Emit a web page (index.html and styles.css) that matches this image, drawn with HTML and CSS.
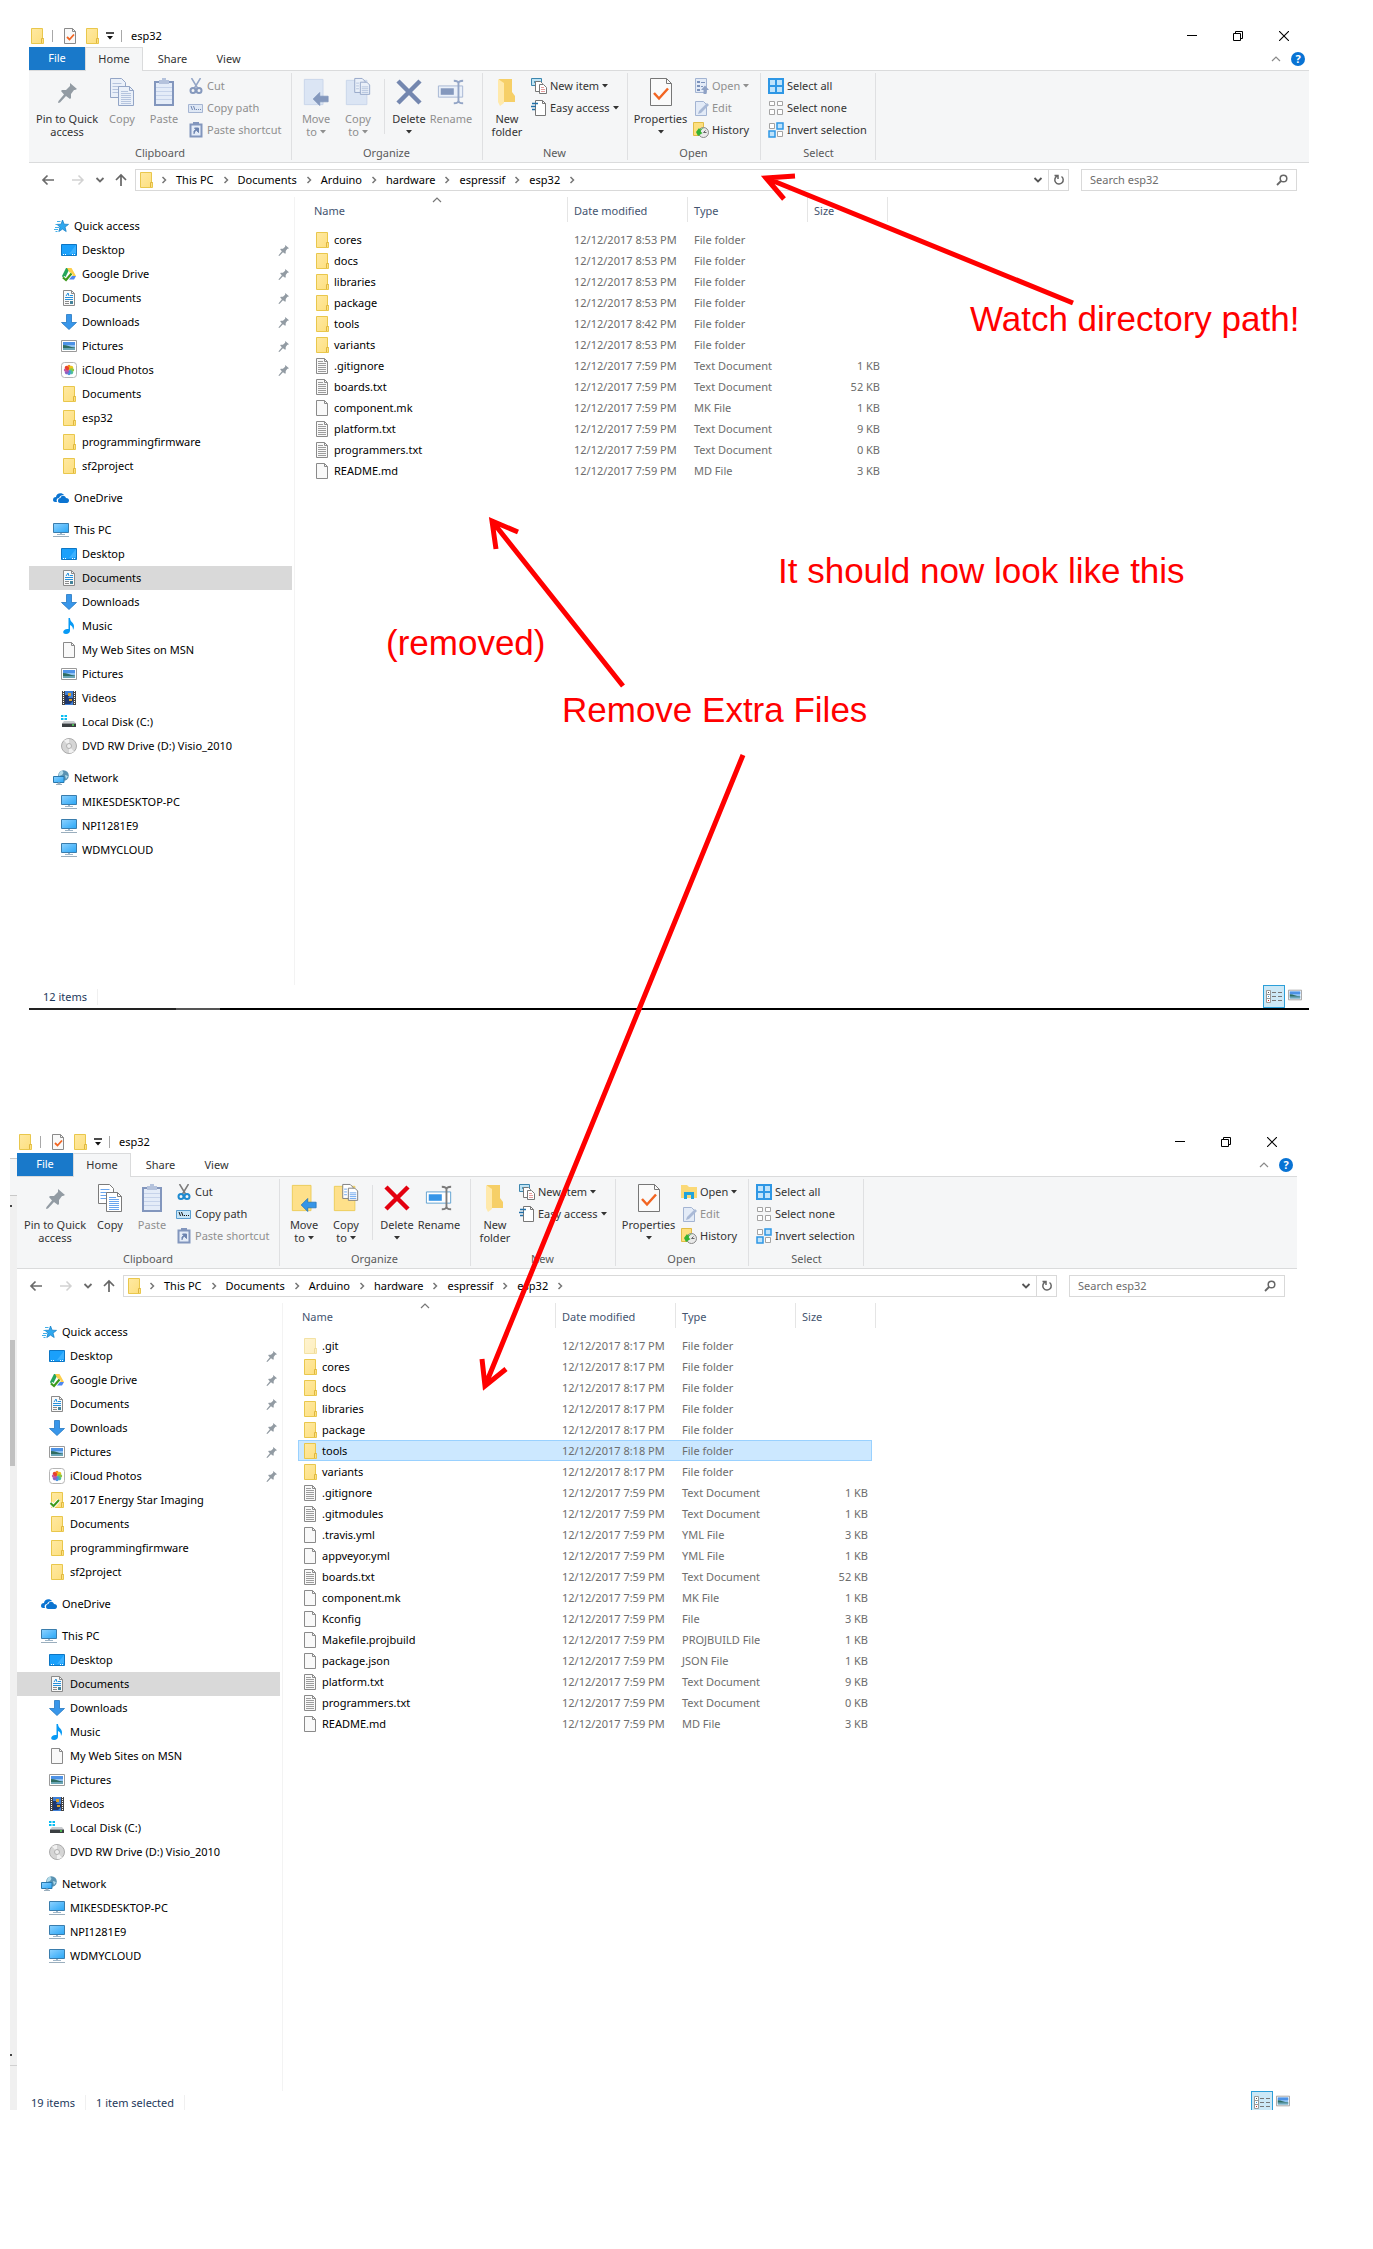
FILE: index.html
```html
<!DOCTYPE html>
<html lang="en">
<head>
<meta charset="utf-8">
<title>esp32 folder cleanup</title>
<link rel="stylesheet" href="styles.css">
</head>
<body>
<svg class="sprite" aria-hidden="true">
  <defs>
    <linearGradient id="gy" x1="0" y1="0" x2="1" y2="1"><stop offset="0" stop-color="#ffe9a2"/><stop offset="1" stop-color="#fddf7e"/></linearGradient>
    <linearGradient id="gb" x1="0" y1="0" x2="1" y2="1"><stop offset="0" stop-color="#8fd3ff"/><stop offset=".5" stop-color="#5bbcfb"/><stop offset="1" stop-color="#2ba7f5"/></linearGradient>
  </defs>
  <symbol id="folder" viewBox="0 0 16 16"><path d="M2.500.5h11v10h1v5h-12z" fill="url(#gy)" stroke="#e9c74c"/><path d="M12.500 15v-4.500h2" fill="none" stroke="#dfb63e"/></symbol>
  <symbol id="folder-check" viewBox="0 0 16 16"><use href="#folder"/><path d="M1.500 11l3 3 5.500-6" fill="none" stroke="#fff" stroke-width="4"/><path d="M1.500 11l3 3 5.500-6" fill="none" stroke="#3d9a1c" stroke-width="2"/></symbol>
  <symbol id="file" viewBox="0 0 16 16"><path d="M2.500.5h8l3 3v12h-11z" fill="#f9f9f9" stroke="#8a8a8a"/><path d="M10.500.5v3h3" fill="none" stroke="#8a8a8a"/></symbol>
  <symbol id="text" viewBox="0 0 16 16"><use href="#file"/><path d="M4 3.500h5M4 5.500h8M4 7.500h8M4 9.500h8M4 11.500h8M4 13.500h8" stroke="#9c9c9c"/></symbol>
  <symbol id="doc" viewBox="0 0 16 16"><use href="#file"/><path d="M5 6l2-3 1 3M4 7.500h8M9 5.500h3M4 9.500h8" fill="none" stroke="#2490dc"/><path d="M4 11.500h4M4 13.500h4" stroke="#8a8a8a"/><path d="M9 11h3v3H9z" fill="#45849b"/></symbol>
  <symbol id="checkdoc" viewBox="0 0 16 16"><use href="#file"/><path d="M5 9l2.500 2.500 4.500-5" fill="none" stroke="#f26522" stroke-width="1.800"/></symbol>
  <symbol id="star" viewBox="0 0 16 16"><path d="M9.500 2l1.600 4.200 4.400.2-3.500 2.700 1.200 4.400-3.700-2.400-3.700 2.400 1.200-4.400L4 6.400l4.100-.2z" fill="#2fa8ef" stroke="#1680c8" stroke-width=".8"/><path d="M4 3.500h3.500M2.500 6.500h2M2 9.500h4M1 11.500h4M2.500 13.500h2" stroke="#41aee8"/></symbol>
  <symbol id="desktop" viewBox="0 0 16 16"><path d="M.5 2.500h15v11H.5z" fill="#1aa0fb" stroke="#0d76c4"/><path d="M15 3v8L8 12z" fill="#3bb1ff"/><path d="M2 12.500h1M4 12.500h1M11 12.500h1M13 12.500h1" stroke="#fff"/></symbol>
  <symbol id="gdrive" viewBox="0 0 16 16"><path d="M5 2h4L5 10l-2 3.500L1 10z" fill="#25a55b"/><path d="M6 2h4.500l4.500 8h-4.500z" fill="#fdcf4b"/><path d="M6 10h9l-2 3.500H4z" fill="#4d86f0"/><path d="M2 11.500l3 2.500 5.500-6.500" fill="none" stroke="#fff" stroke-width="4"/><path d="M2 11.500l3 2.500 5.500-6.500" fill="none" stroke="#3d9a1c" stroke-width="2.200"/></symbol>
  <symbol id="down" viewBox="0 0 16 16"><path d="M5.500.5h5v8h5L8 15.500.5 8.500h5z" fill="#3896ea" stroke="#2478c2" stroke-width=".8"/></symbol>
  <symbol id="picture" viewBox="0 0 16 16"><path d="M.5 2.500h15v11H.5z" fill="#fff" stroke="#9a9a9a"/><path d="M2 4h12v8H2z" fill="#8fc2f4"/><path d="M2 4h12v3H2z" fill="#4d92e6"/><path d="M2 7c4 0 7 2 12 2.500V10H2z" fill="#2f6d62"/><path d="M2 10h12v2H2z" fill="#6aa5b5"/></symbol>
  <symbol id="photos" viewBox="0 0 16 16"><rect x=".5" y=".5" width="15" height="15" rx="3" fill="#fff" stroke="#b5b5b5"/><g stroke-width="3.400" stroke-linecap="round"><path d="M8 6V4.500" stroke="#f58a1f"/><path d="M9.500 6.500l1-1" stroke="#e9c51c"/><path d="M10 8h1.500" stroke="#8fc540"/><path d="M9.500 9.500l1 1" stroke="#4dbf9b"/><path d="M8 10v1.500" stroke="#4a94de"/><path d="M6.500 9.500l-1 1" stroke="#8b62c4"/><path d="M6 8H4.500" stroke="#c65aa5"/><path d="M6.500 6.500l-1-1" stroke="#e8402c"/></g></symbol>
  <symbol id="onedrive" viewBox="0 0 16 16"><path d="M0 10c0-2 1-3 3-3 0-4 6-5 8-2-3 0-4 1-5 3-2 0-3 2-2 4H2c-1 0-2-1-2-2z" fill="#0b74d1"/><path d="M5 11c0-2 1-3 2.500-3C8 5 12 5 13 8c2 0 3 1 3 2.500S15 13 14 13H7c-1 0-2-1-2-2z" fill="#0b74d1"/></symbol>
  <symbol id="pc" viewBox="0 0 16 16"><path d="M.5 1.500h15v9H.5z" fill="url(#gb)" stroke="#3a7dad"/><path d="M7 11h2v1H7zM4 12h8v1H4z" fill="#9fb6c8"/><path d="M0 14.500h16" stroke="#9aaebd"/></symbol>
  <symbol id="music" viewBox="0 0 16 16"><path d="M7.500 0h1.500c0 4 4 4.500 4 8.500 0 1.500-.5 2.500-1 3.500 0-3-1-4-3-5v5.500c0 2-1.500 3.500-4 3.500-2 0-2.800-1-2.800-2 0-2 2.300-3.500 5.300-3z" fill="#089af5"/></symbol>
  <symbol id="video" viewBox="0 0 16 16"><path d="M1 1h14v14H1z" fill="#454545"/><path d="M4 1h8v14H4z" fill="#3f7fd6"/><path d="M4 5h5l-2 3h5v3l-3 3H4z" fill="#1d376e"/><path d="M7 3h3v3H7zM8 9h3v2H8z" fill="#d9a12b"/><path d="M2.500 1v14M13.500 1v14" stroke="#fff" stroke-dasharray="1 1"/></symbol>
  <symbol id="disk" viewBox="0 0 16 16"><path d="M0 1h2.500v2H0zM3.500 1H6v2H3.500zM0 4h2.500v2H0zM3.500 4H6v2H3.500z" fill="#09bdf2"/><path d="M3 7h10l2 2.500H1z" fill="#c9cccf"/><path d="M1 9.500h14v3.500H1z" fill="#3b3f42"/><path d="M11 11h2" stroke="#54e05a" stroke-width="1.500"/></symbol>
  <symbol id="dvd" viewBox="0 0 16 16"><circle cx="8" cy="8" r="7.500" fill="#d5d5d5" stroke="#aaa"/><path d="M8 8L3 2.500A7 7 0 018 1zM8 8l5 5.500A7 7 0 018 15z" fill="#f1f1f1"/><circle cx="8" cy="8" r="2.500" fill="#eee" stroke="#b0b0b0"/></symbol>
  <symbol id="network" viewBox="0 0 16 16"><circle cx="10.500" cy="5.500" r="5.300" fill="#5a93b2"/><path d="M8 1c3 0 3 2 1 4l-3 1c0-2 0-4 2-5zM12 5l3 1-2 3z" fill="#b4dcea"/><path d="M.5 6.500h10.500v6H.5z" fill="url(#gb)" stroke="#2878ad"/><path d="M5 13h2v1H5zM3 14.500h6" fill="#9fb6c8" stroke="#9aaebd"/></symbol>
  <symbol id="pin" viewBox="0 0 20 20"><path d="M13 0l7 6-2 1-1 0-3 4 0 4-1 1-4-3-6 6.500-2 .5.500-2L7 11.500 4 8l1-1h4l4-4z" fill="currentColor"/></symbol>
  <symbol id="copy" viewBox="0 0 26 30"><path d="M1.500 1.500h11l4 4v15h-15z" fill="var(--paper)" stroke="var(--line)"/><path d="M3.500 6.500h9M3.500 9.500h11M3.500 12.500h11M3.500 15.500h11" stroke="var(--accent)"/><path d="M9.500 9.500h11l4 4v15h-15z" fill="var(--paper)" stroke="var(--line)"/><path d="M20.500 9.500v4h4" fill="none" stroke="var(--line)"/><path d="M12 14.500h7M12 16.500h10M12 18.500h10M12 20.500h10M12 22.500h10M12 24.500h10M12 26.500h10" stroke="var(--accent)"/></symbol>
  <symbol id="paste" viewBox="0 0 22 30"><path d="M1 4h20v25H1z" fill="#8296bd"/><path d="M3 6h16v21H3z" fill="#e4ecf8"/><path d="M3 10.500h16M3 14.500h16M3 18.500h16M3 22.500h16" stroke="#c6d3ea"/><path d="M6 7V3h3V1h4v2h3v4z" fill="#b4c2dc"/></symbol>
  <symbol id="cut" viewBox="0 0 16 16"><path d="M3.500 0l6 10M12.500 0l-6 10" stroke="var(--line)" stroke-width="1.500" fill="none"/><circle cx="5" cy="12.500" r="2.500" fill="none" stroke="var(--strong)" stroke-width="2"/><circle cx="11" cy="12.500" r="2.500" fill="none" stroke="var(--strong)" stroke-width="2"/></symbol>
  <symbol id="path" viewBox="0 0 16 16"><path d="M.5 4.500h14v8H.5z" fill="var(--soft)" stroke="var(--line2)"/><path d="M3 6l1.500 4M5.500 6L7 10M8 9.500h1M10 9.500h1M12 9.500h1" stroke="var(--ink)"/></symbol>
  <symbol id="shortcut" viewBox="0 0 16 16"><path d="M2.500 2.500h11v12h-11z" fill="#e4ecf8" stroke="#8296bd" stroke-width="2"/><path d="M5 0h6v3H5z" fill="#8296bd"/><path d="M6 12V9l3-2M6.500 6h4v4.500z" fill="#6d84b0" stroke="#6d84b0"/></symbol>
  <symbol id="moveto" viewBox="0 0 30 30"><path d="M2.500 1.500h20v27h-20z" fill="var(--fold)" stroke="var(--foldline)"/><path d="M12 22.500l7-7v4h9v6h-9v4z" fill="var(--blue)" stroke="var(--blueline)" stroke-width=".8"/></symbol>
  <symbol id="copyto" viewBox="0 0 30 30"><path d="M2.500 2.500h22v26h-22z" fill="var(--fold)" stroke="var(--foldline)"/><path d="M11.500.5h8l3 3v12h-11z" fill="var(--paper)" stroke="var(--line)"/><path d="M17.500 4.500h7l3 3v10h-10z" fill="var(--paper)" stroke="var(--line)"/><path d="M13 5.500h3M13 8.500h3M13 11.500h3M19 9.500h7M19 11.500h7M19 13.500h7M19 15.500h7" stroke="var(--accent)"/></symbol>
  <symbol id="delete" viewBox="0 0 28 30"><path d="M3 4l22 22M25 4L3 26" stroke="var(--del)" stroke-width="4.500"/></symbol>
  <symbol id="rename" viewBox="0 0 30 30"><path d="M1.500 8.500h26v12h-26z" fill="var(--paper)" stroke="var(--line2)"/><path d="M4 11h14v7H4z" fill="var(--blue)"/><path d="M18 3q5 0 5 3v18q0 3-5 3M28 3q-5 0-5 3v18q0 3 5 3" fill="none" stroke="var(--line)" stroke-width="2"/></symbol>
  <symbol id="newfolder" viewBox="0 0 24 30"><path d="M4 2h13v13l3 4v6H7z" fill="#f6cf67"/><path d="M3 2l6 4v20l-4 3-2-4z" fill="#ffe9ab"/></symbol>
  <symbol id="newitem" viewBox="0 0 16 16"><path d="M.5.5h10v7H.5z" fill="#bfe4f5" stroke="#3c86ae"/><path d="M3 3h4v2H3z" fill="#4d9abf"/><path d="M4.500 3.500h5l2 2v8h-7z" fill="#fff" stroke="#777"/><path d="M8.500 6.500h4l3 3v6h-7z" fill="#fff" stroke="#777"/><path d="M10 9.500h3M10 11.500h4M10 13.500h4" stroke="#e59b9b"/></symbol>
  <symbol id="easy" viewBox="0 0 16 16"><path d="M4.500.5h7l3 3v12h-10z" fill="#fff" stroke="#777"/><path d="M11.500.5v3h3" fill="none" stroke="#777"/><path d="M1 3.500h6M0 6.500h5M1 9.500h3" stroke="#2270a8" stroke-width="1.500"/></symbol>
  <symbol id="properties" viewBox="0 0 22 30"><path d="M.5 1.500h16l5 5v22H.5z" fill="#fafafa" stroke="#777"/><path d="M16.500 1.500v5h5" fill="none" stroke="#777"/><path d="M4 16l5 5.500 9-10" fill="none" stroke="#f26522" stroke-width="2.500"/></symbol>
  <symbol id="open-off" viewBox="0 0 16 16"><path d="M2.500.5h11v14h-11z" fill="#e3ebf7" stroke="#a3b4d2"/><path d="M4 3h3v2H4zM4 7h3v2H4zM4 11h3v2H4z" fill="#7c92bb"/><path d="M8 4.500h4M8 8.500h2" stroke="#7c92bb"/><path d="M10.500 16v-4H8l4-4.500 4 4.500h-2.500v4z" fill="#8fa2c5"/></symbol>
  <symbol id="open-on" viewBox="0 0 16 16"><path d="M0 2V1h6l2 2h8v11H0z" fill="#fbd977"/><path d="M3 15V8h10v7h-3v-4H6v4z" fill="#21a3dc"/></symbol>
  <symbol id="edit" viewBox="0 0 16 16"><path d="M2.500 1.500h8l3 3v11h-11z" fill="#e3ebf7" stroke="#a3b4d2"/><path d="M5 14l1-3 8-8 2 2-8 8z" fill="#a9b9d6"/></symbol>
  <symbol id="history" viewBox="0 0 16 16"><path d="M.5.500h10v13H.5z" fill="#fddf7e" stroke="#e2bd45"/><circle cx="10.500" cy="10.500" r="5" fill="#e9e9e9" stroke="#888"/><path d="M10.500 10.500l2-2M10.500 10.500h3" stroke="#666"/><path d="M3 10l3-4 1 1.500q3-2 4-1.500-4 2-3 4l1.500 1L5 14z" fill="#35b233"/></symbol>
  <symbol id="sel-all" viewBox="0 0 16 16"><path d="M1 1h14v14H1zM8 1v14M1 8h14" fill="#bfe3fb" stroke="#2e97e5" stroke-width="2"/></symbol>
  <symbol id="sel-none" viewBox="0 0 16 16"><path d="M1.500 1.500h5v4h-5zM9.500 1.500h5v4h-5zM1.500 9.500h5v5h-5zM9.500 9.500h5v5h-5z" fill="#fff" stroke="#a3a3a3"/></symbol>
  <symbol id="sel-inv" viewBox="0 0 16 16"><path d="M1.500 1.500h5v5h-5zM9.500 9.500h5v5h-5z" fill="#fff" stroke="#a3a3a3"/><path d="M9 1h6v6H9zM1 9h6v6H1z" fill="#bfe3fb" stroke="#2e97e5" stroke-width="1.500"/></symbol>
  <symbol id="caret" viewBox="0 0 6 4"><path d="M0 0h6L3 3.500z" fill="currentColor"/></symbol>
  <symbol id="qat" viewBox="0 0 8 8"><path d="M0 1h8" stroke="#111" stroke-width="1.500"/><path d="M1 4h6L4 7.500z" fill="#111"/></symbol>
  <symbol id="chev-r" viewBox="0 0 6 8"><path d="M1.500 1l3 3-3 3" fill="none" stroke="#777" stroke-width="1.500"/></symbol>
  <symbol id="chev-d" viewBox="0 0 10 8"><path d="M1.500 2L5 5.500 8.500 2" fill="none" stroke="currentColor" stroke-width="1.800"/></symbol>
  <symbol id="chev-u" viewBox="0 0 10 8"><path d="M1 6l4-4 4 4" fill="none" stroke="currentColor" stroke-width="1.200"/></symbol>
  <symbol id="back" viewBox="0 0 14 12"><path d="M13 6H2M6.500 1.500L2 6l4.500 4.500" fill="none" stroke="currentColor" stroke-width="1.700"/></symbol>
  <symbol id="fwd" viewBox="0 0 14 12"><path d="M1 6h11M7.500 1.500L12 6l-4.500 4.500" fill="none" stroke="currentColor" stroke-width="1.500"/></symbol>
  <symbol id="up" viewBox="0 0 12 14"><path d="M6 13V2M1 7l5-5 5 5" fill="none" stroke="#666" stroke-width="1.700"/></symbol>
  <symbol id="refresh" viewBox="0 0 12 12"><path d="M8.500 2.500a4.200 4.200 0 11-4.500-.3M1.500 1.500h3.500v3.500" fill="none" stroke="#666" stroke-width="1.500"/></symbol>
  <symbol id="search" viewBox="0 0 12 12"><circle cx="7.500" cy="4.500" r="3.300" fill="none" stroke="#666" stroke-width="1.500"/><path d="M5 7l-4 4" stroke="#666" stroke-width="1.800"/></symbol>
  <symbol id="min" viewBox="0 0 10 10"><path d="M0 4.500h10" stroke="#000"/></symbol>
  <symbol id="restore" viewBox="0 0 10 10"><path d="M.5 2.500h7v7h-7zM2.500 2.500v-2h7v7h-2" fill="none" stroke="#000"/></symbol>
  <symbol id="close" viewBox="0 0 10 10"><path d="M0 0l10 10M10 0L0 10" stroke="#000" stroke-width="1.100"/></symbol>
  <symbol id="details" viewBox="0 0 16 14"><path d="M.5.5h4v12h-4zM.5 4.500h4M.5 8.500h4" fill="#fff" stroke="#999"/><path d="M6 2.500h4M12 2.500h4M6 6.500h4M12 6.500h4M6 10.500h4M12 10.500h4" stroke="#777"/><path d="M2 2.500h1" stroke="#555"/><path d="M2 6.500h1" stroke="#39d"/><path d="M2 10.500h1" stroke="#c22"/></symbol>
</svg>

<main class="page">
  <section class="window off" aria-label="esp32 after cleanup">
    <header class="title">
      <svg class="i"><use href="#folder"/></svg><span class="bar"></span>
      <svg class="i"><use href="#checkdoc"/></svg><svg class="i i-next"><use href="#folder"/></svg><svg class="i-qat"><use href="#qat"/></svg><span class="bar"></span>
      <h1>esp32</h1>
      <div class="controls"><button aria-label="Minimize"><svg><use href="#min"/></svg></button><button aria-label="Restore"><svg><use href="#restore"/></svg></button><button aria-label="Close"><svg><use href="#close"/></svg></button></div>
    </header>
    <nav class="tabs"><button class="file">File</button><button class="home">Home</button><button class="share">Share</button><button class="view">View</button><span class="help"><svg class="i-chev"><use href="#chev-u"/></svg><button class="q">?</button></span></nav>
    <div class="ribbon">
      <div class="group">
        <div class="tools">
          <button class="big w-pin"><svg class="i-pin"><use href="#pin"/></svg><span>Pin to Quick<br>access</span></button>
          <button class="big dim"><svg class="i-copy"><use href="#copy"/></svg><span>Copy</span></button>
          <button class="big dim"><svg class="i-paste"><use href="#paste"/></svg><span>Paste</span></button>
          <div class="stack"><button class="dim"><svg class="i"><use href="#cut"/></svg>Cut</button><button class="dim"><svg class="i"><use href="#path"/></svg>Copy path</button><button class="dim"><svg class="i"><use href="#shortcut"/></svg>Paste shortcut</button></div>
        </div><p>Clipboard</p>
      </div>
      <div class="group g-org">
        <div class="tools">
          <button class="big dim"><svg class="i-wide"><use href="#moveto"/></svg><span>Move<br>to <svg class="i-caret"><use href="#caret"/></svg></span></button>
          <button class="big dim"><svg class="i-wide"><use href="#copyto"/></svg><span>Copy<br>to <svg class="i-caret"><use href="#caret"/></svg></span></button>
          <span class="split"></span>
          <button class="big"><svg class="i-wide"><use href="#delete"/></svg><span>Delete<br><svg class="i-caret"><use href="#caret"/></svg></span></button>
          <button class="big dim"><svg class="i-wide"><use href="#rename"/></svg><span>Rename</span></button>
        </div><p>Organize</p>
      </div>
      <div class="group g-new">
        <div class="tools">
          <button class="big"><svg class="i-copy"><use href="#newfolder"/></svg><span>New<br>folder</span></button>
          <div class="stack"><button><svg class="i"><use href="#newitem"/></svg>New item<svg class="i-caret"><use href="#caret"/></svg></button><button><svg class="i"><use href="#easy"/></svg>Easy access<svg class="i-caret"><use href="#caret"/></svg></button></div>
        </div><p>New</p>
      </div>
      <div class="group g-open">
        <div class="tools">
          <button class="big w-prop"><svg class="i-paste"><use href="#properties"/></svg><span>Properties<br><svg class="i-caret"><use href="#caret"/></svg></span></button>
          <div class="stack"><button class="dim"><svg class="i"><use href="#open-off"/></svg>Open<svg class="i-caret"><use href="#caret"/></svg></button><button class="dim"><svg class="i"><use href="#edit"/></svg>Edit</button><button><svg class="i"><use href="#history"/></svg>History</button></div>
        </div><p>Open</p>
      </div>
      <div class="group g-sel">
        <div class="tools">
          <div class="stack"><button><svg class="i"><use href="#sel-all"/></svg>Select all</button><button><svg class="i"><use href="#sel-none"/></svg>Select none</button><button><svg class="i"><use href="#sel-inv"/></svg>Invert selection</button></div>
        </div><p>Select</p>
      </div>
    </div>
    <div class="address">
      <div class="arrows"><button aria-label="Back"><svg class="i-arrow"><use href="#back"/></svg></button><button class="faint" aria-label="Forward"><svg class="i-arrow"><use href="#fwd"/></svg></button><button aria-label="Recent"><svg class="i-down"><use href="#chev-d"/></svg></button><button aria-label="Up"><svg class="i-up"><use href="#up"/></svg></button></div>
      <div class="crumbs"><svg class="i"><use href="#folder"/></svg><svg class="i-r"><use href="#chev-r"/></svg><a href="#">This PC</a><svg class="i-r"><use href="#chev-r"/></svg><a href="#">Documents</a><svg class="i-r"><use href="#chev-r"/></svg><a href="#">Arduino</a><svg class="i-r"><use href="#chev-r"/></svg><a href="#">hardware</a><svg class="i-r"><use href="#chev-r"/></svg><a href="#">espressif</a><svg class="i-r"><use href="#chev-r"/></svg><a href="#">esp32</a><svg class="i-r"><use href="#chev-r"/></svg>
        <span class="end"><button aria-label="History"><svg class="i-down"><use href="#chev-d"/></svg></button><button class="refresh" aria-label="Refresh"><svg class="i-12"><use href="#refresh"/></svg></button></span></div>
      <label class="search"><input type="search" placeholder="Search esp32" aria-label="Search esp32"><svg class="i-12"><use href="#search"/></svg></label>
    </div>
    <div class="body">
      <nav class="tree">
        <ul>
          <li class="root"><a href="#"><svg class="i"><use href="#star"/></svg>Quick access</a></li>
          <li><a href="#"><svg class="i"><use href="#desktop"/></svg>Desktop<svg class="i-tack"><use href="#pin"/></svg></a></li>
          <li><a href="#"><svg class="i"><use href="#gdrive"/></svg>Google Drive<svg class="i-tack"><use href="#pin"/></svg></a></li>
          <li><a href="#"><svg class="i"><use href="#doc"/></svg>Documents<svg class="i-tack"><use href="#pin"/></svg></a></li>
          <li><a href="#"><svg class="i"><use href="#down"/></svg>Downloads<svg class="i-tack"><use href="#pin"/></svg></a></li>
          <li><a href="#"><svg class="i"><use href="#picture"/></svg>Pictures<svg class="i-tack"><use href="#pin"/></svg></a></li>
          <li><a href="#"><svg class="i"><use href="#photos"/></svg>iCloud Photos<svg class="i-tack"><use href="#pin"/></svg></a></li>
          <li><a href="#"><svg class="i"><use href="#folder"/></svg>Documents</a></li>
          <li><a href="#"><svg class="i"><use href="#folder"/></svg>esp32</a></li>
          <li><a href="#"><svg class="i"><use href="#folder"/></svg>programmingfirmware</a></li>
          <li><a href="#"><svg class="i"><use href="#folder"/></svg>sf2project</a></li>
        </ul>
        <ul><li class="root"><a href="#"><svg class="i"><use href="#onedrive"/></svg>OneDrive</a></li></ul>
        <ul>
          <li class="root"><a href="#"><svg class="i"><use href="#pc"/></svg>This PC</a></li>
          <li><a href="#"><svg class="i"><use href="#desktop"/></svg>Desktop</a></li>
          <li><a class="current" href="#"><svg class="i"><use href="#doc"/></svg>Documents</a></li>
          <li><a href="#"><svg class="i"><use href="#down"/></svg>Downloads</a></li>
          <li><a href="#"><svg class="i"><use href="#music"/></svg>Music</a></li>
          <li><a href="#"><svg class="i"><use href="#file"/></svg>My Web Sites on MSN</a></li>
          <li><a href="#"><svg class="i"><use href="#picture"/></svg>Pictures</a></li>
          <li><a href="#"><svg class="i"><use href="#video"/></svg>Videos</a></li>
          <li><a href="#"><svg class="i"><use href="#disk"/></svg>Local Disk (C:)</a></li>
          <li><a href="#"><svg class="i"><use href="#dvd"/></svg>DVD RW Drive (D:) Visio_2010</a></li>
        </ul>
        <ul>
          <li class="root"><a href="#"><svg class="i"><use href="#network"/></svg>Network</a></li>
          <li><a href="#"><svg class="i"><use href="#pc"/></svg>MIKESDESKTOP-PC</a></li>
          <li><a href="#"><svg class="i"><use href="#pc"/></svg>NPI1281E9</a></li>
          <li><a href="#"><svg class="i"><use href="#pc"/></svg>WDMYCLOUD</a></li>
        </ul>
      </nav>
      <div class="list">
        <table>
          <colgroup><col class="c-name"><col class="c-mid"><col class="c-mid"><col class="c-size"></colgroup>
          <thead><tr><th scope="col">Name<svg class="i-sort"><use href="#chev-u"/></svg></th><th scope="col">Date modified</th><th scope="col">Type</th><th scope="col">Size</th></tr></thead>
          <tbody>
            <tr><td><svg class="i"><use href="#folder"/></svg>cores</td><td>12/12/2017 8:53 PM</td><td>File folder</td><td></td></tr>
            <tr><td><svg class="i"><use href="#folder"/></svg>docs</td><td>12/12/2017 8:53 PM</td><td>File folder</td><td></td></tr>
            <tr><td><svg class="i"><use href="#folder"/></svg>libraries</td><td>12/12/2017 8:53 PM</td><td>File folder</td><td></td></tr>
            <tr><td><svg class="i"><use href="#folder"/></svg>package</td><td>12/12/2017 8:53 PM</td><td>File folder</td><td></td></tr>
            <tr><td><svg class="i"><use href="#folder"/></svg>tools</td><td>12/12/2017 8:42 PM</td><td>File folder</td><td></td></tr>
            <tr><td><svg class="i"><use href="#folder"/></svg>variants</td><td>12/12/2017 8:53 PM</td><td>File folder</td><td></td></tr>
            <tr><td><svg class="i"><use href="#text"/></svg>.gitignore</td><td>12/12/2017 7:59 PM</td><td>Text Document</td><td>1 KB</td></tr>
            <tr><td><svg class="i"><use href="#text"/></svg>boards.txt</td><td>12/12/2017 7:59 PM</td><td>Text Document</td><td>52 KB</td></tr>
            <tr><td><svg class="i"><use href="#file"/></svg>component.mk</td><td>12/12/2017 7:59 PM</td><td>MK File</td><td>1 KB</td></tr>
            <tr><td><svg class="i"><use href="#text"/></svg>platform.txt</td><td>12/12/2017 7:59 PM</td><td>Text Document</td><td>9 KB</td></tr>
            <tr><td><svg class="i"><use href="#text"/></svg>programmers.txt</td><td>12/12/2017 7:59 PM</td><td>Text Document</td><td>0 KB</td></tr>
            <tr><td><svg class="i"><use href="#file"/></svg>README.md</td><td>12/12/2017 7:59 PM</td><td>MD File</td><td>3 KB</td></tr>
          </tbody>
        </table>
      </div>
    </div>
    <footer class="status"><span>12 items</span><div class="views"><button class="on" aria-label="Details"><svg class="i-det"><use href="#details"/></svg></button><button aria-label="Thumbnails"><svg class="i"><use href="#picture"/></svg></button></div></footer>
  </section>

  <div class="lower">
    <div class="behind" aria-hidden="true"><span class="edge"></span><span class="track"><span class="tick"></span><span class="thumb"></span><span class="tick tick-end"></span></span><span class="foot"></span></div>
    <section class="window on" aria-label="esp32 before cleanup">
      <header class="title">
        <svg class="i"><use href="#folder"/></svg><span class="bar"></span>
        <svg class="i"><use href="#checkdoc"/></svg><svg class="i i-next"><use href="#folder"/></svg><svg class="i-qat"><use href="#qat"/></svg><span class="bar"></span>
        <h1>esp32</h1>
        <div class="controls"><button aria-label="Minimize"><svg><use href="#min"/></svg></button><button aria-label="Restore"><svg><use href="#restore"/></svg></button><button aria-label="Close"><svg><use href="#close"/></svg></button></div>
      </header>
      <nav class="tabs"><button class="file">File</button><button class="home">Home</button><button class="share">Share</button><button class="view">View</button><span class="help"><svg class="i-chev"><use href="#chev-u"/></svg><button class="q">?</button></span></nav>
      <div class="ribbon">
        <div class="group">
          <div class="tools">
            <button class="big w-pin"><svg class="i-pin"><use href="#pin"/></svg><span>Pin to Quick<br>access</span></button>
            <button class="big"><svg class="i-copy"><use href="#copy"/></svg><span>Copy</span></button>
            <button class="big dim"><svg class="i-paste"><use href="#paste"/></svg><span>Paste</span></button>
            <div class="stack"><button><svg class="i"><use href="#cut"/></svg>Cut</button><button><svg class="i"><use href="#path"/></svg>Copy path</button><button class="dim"><svg class="i"><use href="#shortcut"/></svg>Paste shortcut</button></div>
          </div><p>Clipboard</p>
        </div>
        <div class="group g-org">
          <div class="tools">
            <button class="big"><svg class="i-wide"><use href="#moveto"/></svg><span>Move<br>to <svg class="i-caret"><use href="#caret"/></svg></span></button>
            <button class="big"><svg class="i-wide"><use href="#copyto"/></svg><span>Copy<br>to <svg class="i-caret"><use href="#caret"/></svg></span></button>
            <span class="split"></span>
            <button class="big"><svg class="i-wide"><use href="#delete"/></svg><span>Delete<br><svg class="i-caret"><use href="#caret"/></svg></span></button>
            <button class="big"><svg class="i-wide"><use href="#rename"/></svg><span>Rename</span></button>
          </div><p>Organize</p>
        </div>
        <div class="group g-new">
          <div class="tools">
            <button class="big"><svg class="i-copy"><use href="#newfolder"/></svg><span>New<br>folder</span></button>
            <div class="stack"><button><svg class="i"><use href="#newitem"/></svg>New item<svg class="i-caret"><use href="#caret"/></svg></button><button><svg class="i"><use href="#easy"/></svg>Easy access<svg class="i-caret"><use href="#caret"/></svg></button></div>
          </div><p>New</p>
        </div>
        <div class="group g-open">
          <div class="tools">
            <button class="big w-prop"><svg class="i-paste"><use href="#properties"/></svg><span>Properties<br><svg class="i-caret"><use href="#caret"/></svg></span></button>
            <div class="stack"><button><svg class="i"><use href="#open-on"/></svg>Open<svg class="i-caret"><use href="#caret"/></svg></button><button class="dim"><svg class="i"><use href="#edit"/></svg>Edit</button><button><svg class="i"><use href="#history"/></svg>History</button></div>
          </div><p>Open</p>
        </div>
        <div class="group g-sel">
          <div class="tools">
            <div class="stack"><button><svg class="i"><use href="#sel-all"/></svg>Select all</button><button><svg class="i"><use href="#sel-none"/></svg>Select none</button><button><svg class="i"><use href="#sel-inv"/></svg>Invert selection</button></div>
          </div><p>Select</p>
        </div>
      </div>
      <div class="address">
        <div class="arrows"><button aria-label="Back"><svg class="i-arrow"><use href="#back"/></svg></button><button class="faint" aria-label="Forward"><svg class="i-arrow"><use href="#fwd"/></svg></button><button aria-label="Recent"><svg class="i-down"><use href="#chev-d"/></svg></button><button aria-label="Up"><svg class="i-up"><use href="#up"/></svg></button></div>
        <div class="crumbs"><svg class="i"><use href="#folder"/></svg><svg class="i-r"><use href="#chev-r"/></svg><a href="#">This PC</a><svg class="i-r"><use href="#chev-r"/></svg><a href="#">Documents</a><svg class="i-r"><use href="#chev-r"/></svg><a href="#">Arduino</a><svg class="i-r"><use href="#chev-r"/></svg><a href="#">hardware</a><svg class="i-r"><use href="#chev-r"/></svg><a href="#">espressif</a><svg class="i-r"><use href="#chev-r"/></svg><a href="#">esp32</a><svg class="i-r"><use href="#chev-r"/></svg>
          <span class="end"><button aria-label="History"><svg class="i-down"><use href="#chev-d"/></svg></button><button class="refresh" aria-label="Refresh"><svg class="i-12"><use href="#refresh"/></svg></button></span></div>
        <label class="search"><input type="search" placeholder="Search esp32" aria-label="Search esp32"><svg class="i-12"><use href="#search"/></svg></label>
      </div>
      <div class="body">
        <nav class="tree">
          <ul>
            <li class="root"><a href="#"><svg class="i"><use href="#star"/></svg>Quick access</a></li>
            <li><a href="#"><svg class="i"><use href="#desktop"/></svg>Desktop<svg class="i-tack"><use href="#pin"/></svg></a></li>
            <li><a href="#"><svg class="i"><use href="#gdrive"/></svg>Google Drive<svg class="i-tack"><use href="#pin"/></svg></a></li>
            <li><a href="#"><svg class="i"><use href="#doc"/></svg>Documents<svg class="i-tack"><use href="#pin"/></svg></a></li>
            <li><a href="#"><svg class="i"><use href="#down"/></svg>Downloads<svg class="i-tack"><use href="#pin"/></svg></a></li>
            <li><a href="#"><svg class="i"><use href="#picture"/></svg>Pictures<svg class="i-tack"><use href="#pin"/></svg></a></li>
            <li><a href="#"><svg class="i"><use href="#photos"/></svg>iCloud Photos<svg class="i-tack"><use href="#pin"/></svg></a></li>
            <li><a href="#"><svg class="i"><use href="#folder-check"/></svg>2017 Energy Star Imaging</a></li>
            <li><a href="#"><svg class="i"><use href="#folder"/></svg>Documents</a></li>
            <li><a href="#"><svg class="i"><use href="#folder"/></svg>programmingfirmware</a></li>
            <li><a href="#"><svg class="i"><use href="#folder"/></svg>sf2project</a></li>
          </ul>
          <ul><li class="root"><a href="#"><svg class="i"><use href="#onedrive"/></svg>OneDrive</a></li></ul>
          <ul>
            <li class="root"><a href="#"><svg class="i"><use href="#pc"/></svg>This PC</a></li>
            <li><a href="#"><svg class="i"><use href="#desktop"/></svg>Desktop</a></li>
            <li><a class="current" href="#"><svg class="i"><use href="#doc"/></svg>Documents</a></li>
            <li><a href="#"><svg class="i"><use href="#down"/></svg>Downloads</a></li>
            <li><a href="#"><svg class="i"><use href="#music"/></svg>Music</a></li>
            <li><a href="#"><svg class="i"><use href="#file"/></svg>My Web Sites on MSN</a></li>
            <li><a href="#"><svg class="i"><use href="#picture"/></svg>Pictures</a></li>
            <li><a href="#"><svg class="i"><use href="#video"/></svg>Videos</a></li>
            <li><a href="#"><svg class="i"><use href="#disk"/></svg>Local Disk (C:)</a></li>
            <li><a href="#"><svg class="i"><use href="#dvd"/></svg>DVD RW Drive (D:) Visio_2010</a></li>
          </ul>
          <ul>
            <li class="root"><a href="#"><svg class="i"><use href="#network"/></svg>Network</a></li>
            <li><a href="#"><svg class="i"><use href="#pc"/></svg>MIKESDESKTOP-PC</a></li>
            <li><a href="#"><svg class="i"><use href="#pc"/></svg>NPI1281E9</a></li>
            <li><a href="#"><svg class="i"><use href="#pc"/></svg>WDMYCLOUD</a></li>
          </ul>
        </nav>
        <div class="list">
          <table>
            <colgroup><col class="c-name"><col class="c-mid"><col class="c-mid"><col class="c-size"></colgroup>
            <thead><tr><th scope="col">Name<svg class="i-sort"><use href="#chev-u"/></svg></th><th scope="col">Date modified</th><th scope="col">Type</th><th scope="col">Size</th></tr></thead>
            <tbody>
              <tr><td><svg class="i ghost"><use href="#folder"/></svg>.git</td><td>12/12/2017 8:17 PM</td><td>File folder</td><td></td></tr>
              <tr><td><svg class="i"><use href="#folder"/></svg>cores</td><td>12/12/2017 8:17 PM</td><td>File folder</td><td></td></tr>
              <tr><td><svg class="i"><use href="#folder"/></svg>docs</td><td>12/12/2017 8:17 PM</td><td>File folder</td><td></td></tr>
              <tr><td><svg class="i"><use href="#folder"/></svg>libraries</td><td>12/12/2017 8:17 PM</td><td>File folder</td><td></td></tr>
              <tr><td><svg class="i"><use href="#folder"/></svg>package</td><td>12/12/2017 8:17 PM</td><td>File folder</td><td></td></tr>
              <tr class="picked"><td><svg class="i"><use href="#folder"/></svg>tools</td><td>12/12/2017 8:18 PM</td><td>File folder</td><td></td></tr>
              <tr><td><svg class="i"><use href="#folder"/></svg>variants</td><td>12/12/2017 8:17 PM</td><td>File folder</td><td></td></tr>
              <tr><td><svg class="i"><use href="#text"/></svg>.gitignore</td><td>12/12/2017 7:59 PM</td><td>Text Document</td><td>1 KB</td></tr>
              <tr><td><svg class="i"><use href="#text"/></svg>.gitmodules</td><td>12/12/2017 7:59 PM</td><td>Text Document</td><td>1 KB</td></tr>
              <tr><td><svg class="i"><use href="#file"/></svg>.travis.yml</td><td>12/12/2017 7:59 PM</td><td>YML File</td><td>3 KB</td></tr>
              <tr><td><svg class="i"><use href="#file"/></svg>appveyor.yml</td><td>12/12/2017 7:59 PM</td><td>YML File</td><td>1 KB</td></tr>
              <tr><td><svg class="i"><use href="#text"/></svg>boards.txt</td><td>12/12/2017 7:59 PM</td><td>Text Document</td><td>52 KB</td></tr>
              <tr><td><svg class="i"><use href="#file"/></svg>component.mk</td><td>12/12/2017 7:59 PM</td><td>MK File</td><td>1 KB</td></tr>
              <tr><td><svg class="i"><use href="#file"/></svg>Kconfig</td><td>12/12/2017 7:59 PM</td><td>File</td><td>3 KB</td></tr>
              <tr><td><svg class="i"><use href="#file"/></svg>Makefile.projbuild</td><td>12/12/2017 7:59 PM</td><td>PROJBUILD File</td><td>1 KB</td></tr>
              <tr><td><svg class="i"><use href="#file"/></svg>package.json</td><td>12/12/2017 7:59 PM</td><td>JSON File</td><td>1 KB</td></tr>
              <tr><td><svg class="i"><use href="#text"/></svg>platform.txt</td><td>12/12/2017 7:59 PM</td><td>Text Document</td><td>9 KB</td></tr>
              <tr><td><svg class="i"><use href="#text"/></svg>programmers.txt</td><td>12/12/2017 7:59 PM</td><td>Text Document</td><td>0 KB</td></tr>
              <tr><td><svg class="i"><use href="#file"/></svg>README.md</td><td>12/12/2017 7:59 PM</td><td>MD File</td><td>3 KB</td></tr>
            </tbody>
          </table>
        </div>
      </div>
      <footer class="status"><span>19 items</span><span>1 item selected</span><div class="views"><button class="on" aria-label="Details"><svg class="i-det"><use href="#details"/></svg></button><button aria-label="Thumbnails"><svg class="i"><use href="#picture"/></svg></button></div></footer>
    </section>
  </div>

  <svg class="marks" width="1373" height="1400" viewBox="0 0 1373 1400" aria-hidden="true">
    <g fill="none" stroke="#f00" stroke-width="5">
      <path d="M1073 303L766 178M795 176L766 178l18 21"/>
      <path d="M623 686L492 521M518 532L492 521l4 28"/>
      <path d="M743 755L485 1386M482 1359l3 27 21-17"/>
    </g>
  </svg>
  <p class="note n-path">Watch directory path!</p>
  <p class="note n-look">It should now look like this</p>
  <p class="note n-removed">(removed)</p>
  <p class="note n-extra">Remove Extra Files</p>
</main>
</body>
</html>
```
FILE: styles.css
```css
* { box-sizing: border-box; }
body {
  margin: 0;
  background: #fff;
  color: #000;
  font: 11px/16px "Noto Sans", "Open Sans", sans-serif;
}
button {
  margin: 0;
  padding: 0;
  border: 0;
  background: none;
  color: inherit;
  font: inherit;
}
a { color: inherit; text-decoration: none; }
p, h1, ul { margin: 0; padding: 0; }
ul { list-style: none; }
svg { display: block; flex: none; }
.sprite { position: absolute; width: 0; height: 0; }

.page { position: relative; min-height: 2249px; padding: 24px 64px 0 29px; }

/* icon boxes */
.i { width: 16px; height: 16px; }
.i-qat { width: 8px; height: 8px; }
.i-caret { width: 6px; height: 4px; }
.i-pin { width: 20px; height: 20px; color: #929ba3; }
.i-tack { width: 11px; height: 11px; margin-left: auto; color: #929ba3; }
.i-copy { width: 26px; height: 30px; }
.i-paste { width: 22px; height: 30px; }
.i-wide { width: 28px; height: 30px; }
.i-chev, .i-down, .i-sort { width: 10px; height: 8px; }
.i-arrow { width: 14px; height: 12px; }
.i-up { width: 12px; height: 14px; }
.i-12 { width: 12px; height: 12px; }
.i-r { width: 6px; height: 8px; }
.i-det { width: 16px; height: 14px; }
.ghost { opacity: .5; }

/* ribbon icon palettes */
.on {
  --paper: #fff; --line: #7b7b7b; --line2: #5b9ecf; --accent: #6aa5ee; --strong: #1e8ad0;
  --soft: #c6e6f8; --ink: #111; --fold: #fee08a; --foldline: #eccb57;
  --blue: #3595e8; --blueline: #1f71b8; --del: #e3000f;
}
.off {
  --paper: #eaf0f9; --line: #93a5c6; --line2: #a5b5d2; --accent: #b5c4de; --strong: #8699bd;
  --soft: #dfe8f5; --ink: #6f86b2; --fold: #dbe5f4; --foldline: #c8d5ea;
  --blue: #8498bd; --blueline: #7e93ba; --del: #7487af;
}

/* title bar */
.title { display: flex; align-items: center; height: 23px; }
.title .bar { width: 1px; height: 12px; margin: 0 9px 0 7px; background: #a8a8a8; }
.title .i-next, .title .i-qat { margin-left: 6px; }
.title h1 { font-size: 11px; font-weight: 400; }
.controls { display: flex; margin-left: auto; padding-right: 2px; }
.controls button { display: grid; place-items: center; width: 46px; height: 22px; }
.controls svg { width: 10px; height: 10px; }

/* tabs */
.tabs { display: flex; height: 24px; margin-bottom: -1px; color: #333; }
.tabs > button { height: 24px; padding-bottom: 1px; }
.tabs .file { width: 56px; height: 23px; background: #1979ca; color: #fff; }
.tabs .home { position: relative; width: 58px; border: 1px solid #dadbdc; border-bottom: 0; background: #f5f6f7; }
.tabs .share { width: 59px; }
.tabs .view { width: 53px; }
.help { display: flex; align-items: center; gap: 10px; margin-left: auto; padding-right: 4px; color: #8a8a8a; }
.help .q { width: 14px; height: 14px; border-radius: 50%; background: #0873d4; color: #fff; font-weight: 700; line-height: 14px; }

/* ribbon */
.ribbon {
  display: flex;
  height: 93px;
  padding: 2px 0;
  border: solid #dadbdc;
  border-width: 1px 0;
  background: #f5f6f7;
  color: #333;
}
.group { width: 263px; padding: 4px 0 0 4px; border-right: 1px solid #dfe0e2; }
.group p { margin-top: 2px; margin-left: -4px; color: #5a5a5a; text-align: center; }
.g-org { width: 191px; padding-left: 3px; }
.g-new { width: 145px; padding-left: 3px; }
.g-open { width: 133px; padding-left: 3px; }
.g-sel { width: 115px; padding-left: 5px; }
.tools { display: flex; height: 66px; }
.big { display: flex; flex-direction: column; align-items: center; width: 42px; line-height: 13px; white-space: nowrap; }
.big > svg { margin-bottom: 5px; }
.big .i-pin { margin: 6px 0 9px; }
.big .i-caret { display: inline-block; vertical-align: 2px; }
.w-pin { width: 68px; }
.w-prop { width: 59px; }
.split { width: 1px; height: 55px; margin: 2px 3px 0 5px; background: #dfe0e2; }
.dim { color: #8f8f8f; }
.stack { display: flex; flex-direction: column; margin-left: 3px; }
.g-sel .stack { margin-left: 2px; }
.stack button { display: flex; align-items: center; gap: 3px; height: 22px; padding-bottom: 4px; white-space: nowrap; }

/* address row */
.address { display: flex; align-items: center; height: 34px; padding-right: 12px; }
.arrows { display: flex; align-items: center; gap: 10px; width: 106px; padding-left: 12px; color: #6b6b6b; }
.arrows .faint { margin-left: 6px; color: #d2d2d2; }
.crumbs { display: flex; flex: 1; align-items: center; gap: 9px; height: 22px; padding-left: 2px; border: 1px solid #d9d9d9; white-space: nowrap; }
.crumbs .i { margin-right: -2px; }
.end { display: flex; align-self: stretch; margin-left: auto; color: #555; }
.end button { display: grid; place-items: center; width: 20px; }
.end .refresh { border-left: 1px solid #d9d9d9; }
.search { display: flex; align-items: center; width: 216px; height: 22px; margin-left: 12px; padding: 0 8px; border: 1px solid #d9d9d9; }
.search input { flex: 1; min-width: 0; padding: 0; border: 0; outline: 0; background: none; font: inherit; }
.search input::placeholder { color: #6d6d6d; opacity: 1; }

/* panes */
.body { display: flex; min-height: 788px; }
.tree { width: 266px; padding: 17px 2px 0 0; border-right: 1px solid #f3f3f3; }
.tree ul { margin-bottom: 8px; }
.tree a { display: flex; align-items: center; gap: 5px; height: 24px; padding: 0 3px 0 32px; }
.tree .root a { padding-left: 24px; }
.tree .current { background: #d9d9d9; }
.list { flex: 1; padding-left: 15px; }
table { width: 578px; border-spacing: 0; table-layout: fixed; }
.c-name { width: 258px; }
.c-mid { width: 120px; }
.c-size { width: 80px; }
th { height: 25px; padding: 2px 6px 0; border-right: 1px solid #e5e5e5; color: #44546f; font-weight: 400; text-align: left; }
th:first-child { position: relative; padding-left: 4px; }
.i-sort { position: absolute; top: -1px; left: 122px; color: #777; }
tbody::before { content: ""; display: block; height: 7px; }
td { height: 21px; padding: 0 6px; color: #6d6d6d; }
td:first-child { display: flex; align-items: center; gap: 4px; padding-left: 4px; color: #000; }
td:last-child { padding-right: 4px; border-right: 4px solid transparent; background-clip: padding-box; text-align: right; }
.picked td { background-color: #cce8ff; box-shadow: inset 0 1px #99d1ff, inset 0 -1px #99d1ff; }
.picked td:first-child { border-left: 1px solid #99d1ff; padding-left: 3px; }
.picked td:last-child { box-shadow: inset -1px 0 #99d1ff, inset 0 1px #99d1ff, inset 0 -1px #99d1ff; }

/* status bar */
.status { display: flex; height: 23px; padding: 0 6px 0 14px; color: #1e395b; overflow: hidden; }
.status > span { height: 16px; margin: 4px 10px 0 0; padding-right: 10px; border-right: 1px solid #f0f0f0; }
.views { display: flex; gap: 2px; margin-left: auto; }
.views button { display: grid; place-items: center; height: 23px; }
.views .on { width: 22px; border: 1px solid #2c9fd9; background: #cce8f6; }
.views button:last-child { align-items: start; padding-top: 3px; }
.views .i { width: 14px; height: 14px; margin: 0 1px; }
.off { border-bottom: 2px solid; border-image: linear-gradient(90deg, #222 148px, #555 148px 192px, #000 192px) 1; }

/* lower window with the sliver of a page behind it */
.lower { display: flex; margin: 120px 12px 0 -19px; }
.lower .window { flex: 1; min-width: 0; }
.lower .status { height: 19px; }
.behind { display: flex; flex-direction: column; width: 7px; margin-top: 28px; background: #f0f0f0; }
.edge { height: 38px; border: solid #c8c8c8; border-width: 1px 0; background: #f5f6f7; }
.track { display: flex; flex: 1; flex-direction: column; padding: 9px 0; }
.tick { width: 2px; height: 2px; background: #444; }
.thumb { width: 5px; height: 126px; margin-top: 133px; background: #c1c1c1; }
.tick-end { margin-top: auto; }
.foot { height: 45px; border-top: 1px solid #d0d0d0; }

/* hand-drawn notes over the windows */
.marks { position: absolute; top: 0; left: 0; pointer-events: none; }
.note { position: absolute; color: #f00; font: 35px/40px "Liberation Sans", Arial, sans-serif; white-space: nowrap; }
.n-path { top: 299px; left: 970px; }
.n-look { top: 551px; left: 778px; }
.n-removed { top: 623px; left: 386px; }
.n-extra { top: 690px; left: 562px; }
```
